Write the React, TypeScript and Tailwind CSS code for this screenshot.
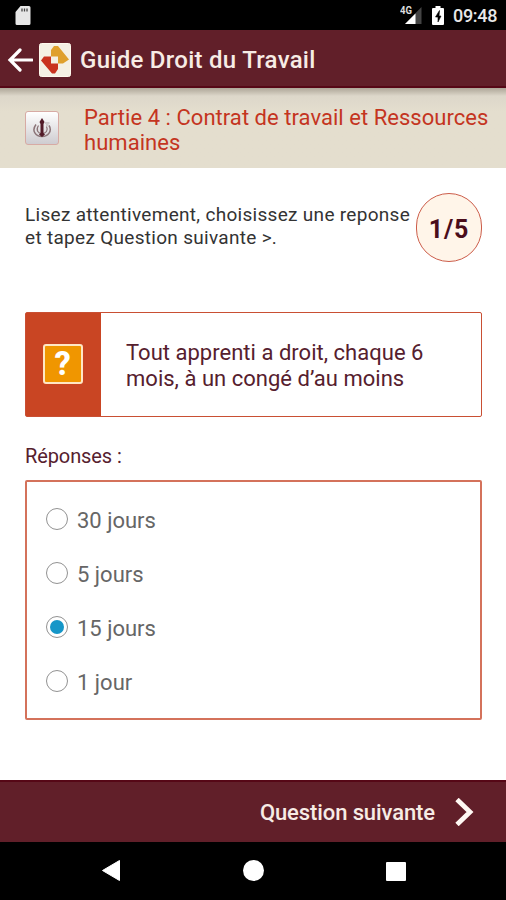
import React, { useState } from "react";

const options = ["30 jours", "5 jours", "15 jours", "1 jour"];

function StatusBar() {
  return (
    <div className="flex h-[30px] shrink-0 items-start bg-black">
      <svg className="ml-[15px] mt-[6px] h-[19px] w-4" viewBox="0 0 16 19">
        <path d="M5.5 0H14a1.5 1.5 0 0 1 1.5 1.5v16A1.5 1.5 0 0 1 14 19H2a1.5 1.5 0 0 1-1.5-1.5V6z" fill="#e6e6e6" />
        <path d="M7 2.500v3M9.500 2.500v3M12 2.500v3" stroke="#444" strokeWidth="1.300" />
      </svg>
      <svg className="ml-auto mt-[6px] h-[19px] w-[22px]" viewBox="0 0 22 19">
        <path d="M21.500 1v17H5z" fill="#444" />
        <path d="M15.500 7.500V18H5z" fill="#fff" />
        <text x="0" y="8" fontSize="10" fontWeight="700" fill="#ddd" fontFamily="Roboto, sans-serif" textLength="12" lengthAdjust="spacingAndGlyphs">4G</text>
      </svg>
      <svg className="ml-[10px] mt-[6px] h-[19px] w-3" viewBox="0 0 12 19">
        <path d="M3.500 0h5v2H11a1 1 0 0 1 1 1v15a1 1 0 0 1-1 1H1a1 1 0 0 1-1-1V3a1 1 0 0 1 1-1h2.500z" fill="#fff" />
        <path d="M7.500 4.500 3.500 11H6v5l3-6H7z" fill="#000" stroke="#000" strokeWidth=".6" />
      </svg>
      <span className="ml-[9px] mr-[9px] mt-[3px] w-[44px] whitespace-nowrap text-[18px] font-medium leading-[26px] tracking-[-0.3px] text-[#e8e8e8]">09:48</span>
    </div>
  );
}

function AppHeader() {
  return (
    <header className="flex h-[58px] shrink-0 items-center border-b-2 border-[#560716] bg-[#611f29]">
      <svg className="ml-[7px] mt-[3px] h-6 w-[26px]" viewBox="0 0 26 24" fill="none" stroke="#fff" strokeWidth="3.200">
        <path d="M25 12H3M13 2 3 12l10 10" strokeLinecap="round" />
      </svg>
      <svg className="ml-[6px] mt-[3px] h-[34px] w-8" viewBox="0 0 32 34">
        <rect x=".5" y=".5" width="31" height="33" rx="2" fill="#f4f0e4" stroke="#fff9ee" />
        <path d="M12 7 15 3h4l11 13.500-6 4h-5V13.500h-7z" fill="#dfa02d" />
        <path d="M2 17.500 5 13.500h7v7h7V26l-3 4.500h-3z" fill="#c9321f" />
      </svg>
      <h1 className="ml-[9px] mt-[4px] whitespace-nowrap text-[24px] font-medium leading-7 tracking-[0.28px] text-[#f7ece5]">Guide Droit du Travail</h1>
    </header>
  );
}

function ChapterBanner() {
  return (
    <section className="flex h-20 shrink-0 bg-linear-to-b from-[#aea698] via-[#ddd7ca] via-10% to-[#e4dece] to-30% text-[#c4351f]">
      <div className="ml-[25px] mt-[23px] flex h-[34px] w-[34px] shrink-0 items-center justify-center rounded-[3px] border border-[#d7aaa4] bg-linear-to-b from-white to-[#ceccd0]">
        <svg className="h-[20px] w-[20px]" viewBox="0 0 20 20" fill="none">
          <path d="M4 6.500C-1 13 4 18.500 10 18.500S20.500 13 17 7.500" stroke="#8b7478" strokeWidth="1.500" />
          <path d="M6.500 7.500C3.500 12 6 15.500 10 15.500s6.500-3 4.500-7" stroke="#8b7478" strokeWidth="1.200" />
          <path d="M10 0 12.500 4 11.500 6v9l1.500 1.500-3 2.500-3-2.500L8.500 15V6l-1-2z" fill="#521b28" />
          <path d="M13 5h4.500M14 7h2.500" stroke="#b5abad" strokeWidth="1" />
        </svg>
      </div>
      <h2 className="ml-[25px] mt-[17px] whitespace-nowrap text-[22px] leading-[25px] tracking-[0.04px]">
        Partie 4 : Contrat de travail et Ressources<br />humaines
      </h2>
    </section>
  );
}

export default function App() {
  const [selected, setSelected] = useState(2);
  return (
    <div className="flex h-[900px] w-[506px] flex-col overflow-hidden bg-white font-['Roboto',sans-serif]">
      <StatusBar />
      <AppHeader />
      <ChapterBanner />
      <main className="flex flex-1 flex-col px-[25px]">
        <div className="mt-[25px] flex h-[69px]">
          <p className="mt-[10px] w-[391px] shrink-0 whitespace-nowrap text-[19px] leading-[23px] tracking-[0.3px] text-[#333]">
            Lisez attentivement, choisissez une reponse<br />et tapez Question suivante &gt;.
          </p>
          <div className="flex h-[69px] w-[66px] shrink-0 items-center justify-center rounded-full border border-[#cc5d4a] bg-[#fff5e9] pt-[4px] text-[25px] font-bold tracking-[0.9px] text-[#4b0d1b]">1/5</div>
        </div>
        <section className="mt-[50px] flex h-[105px] w-[457px] rounded-xs border border-[#c94f33]">
          <div className="flex w-[75px] shrink-0 items-center justify-center bg-[#c94523]">
            <div className="mb-px mr-px flex h-10 w-10 items-center justify-center rounded-[3px] border-2 border-[#ffe7c5] bg-[#f09600] text-[34px] font-extrabold leading-10 text-white"><span className="-mt-[3px] scale-x-95">?</span></div>
          </div>
          <p className="ml-[25px] mt-[27px] whitespace-nowrap text-[22px] leading-[26px] tracking-[0.02px] text-[#56202e]">
            Tout apprenti a droit, chaque 6<br />mois, à un congé d’au moins
          </p>
        </section>
        <h3 className="mt-[26px] text-[20px] leading-[26px] tracking-[-0.1px] text-[#56202e]">Réponses :</h3>
        <section className="mt-[11px] flex h-[240px] w-[457px] flex-col rounded-xs border-2 border-[#d4725b] pl-[19px] pt-[11px]" role="radiogroup">
          {options.map((option, index) => (
            <button key={option} role="radio" aria-checked={selected === index} onClick={() => setSelected(index)} className="flex h-[54px] shrink-0 items-center text-left text-[22px] text-[#666]">
              <span className="mb-[3px] flex h-[22px] w-[22px] items-center justify-center rounded-full border border-[#929292]">
                {selected === index && <span className="h-[14px] w-[14px] rounded-full bg-[#1596c8]" />}
              </span>
              <span className="ml-[9px]">{option}</span>
            </button>
          ))}
        </section>
      </main>
      <footer className="flex h-[62px] shrink-0 items-center justify-end border-t-2 border-[#560716] bg-[#611f29]">
        <span className="whitespace-nowrap text-[22px] font-medium tracking-[-0.1px] text-[#f7ece5]">Question suivante</span>
        <svg className="mb-px ml-[20px] mr-[31px] h-7 w-5" viewBox="0 0 20 28" fill="none" stroke="#fff8f3" strokeWidth="4.800">
          <path d="M2 1.500 15 14 2 26.500" />
        </svg>
      </footer>
      <nav className="flex h-[58px] shrink-0 bg-black">
        <svg className="ml-[102px] mt-[18px] h-[21px] w-[18px]" viewBox="0 0 18 21"><path d="M17.500.5v20L.5 10.500z" fill="#fff" stroke="#fff" strokeLinejoin="round" /></svg>
        <span className="ml-[123px] mt-[18px] h-[21px] w-[21px] rounded-full bg-white" />
        <span className="ml-[122px] mt-[20px] h-[19px] w-5 rounded-[1px] bg-white" />
      </nav>
    </div>
  );
}
